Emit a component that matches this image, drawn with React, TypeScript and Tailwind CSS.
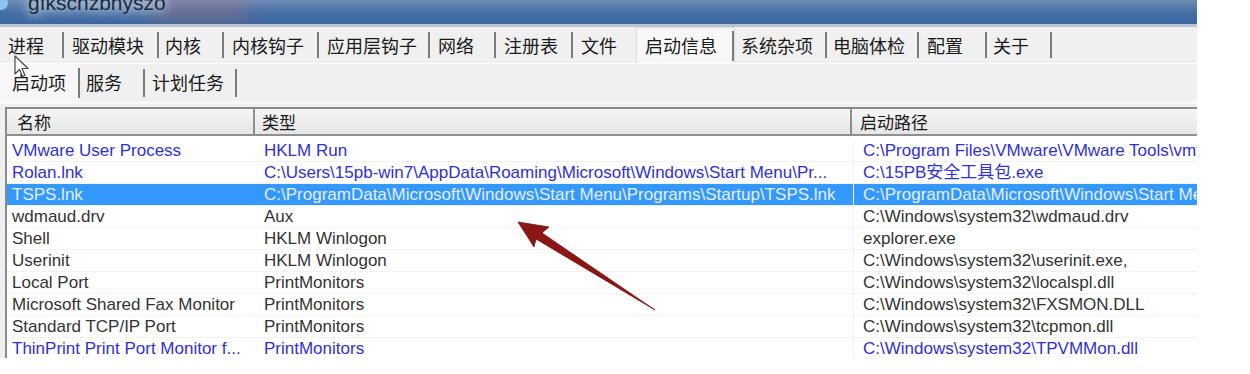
const topTabs = [
  { label: "进程", w: "w-[64px]", pl: "pl-[8px]" },
  { label: "驱动模块", w: "w-[95px]", pl: "pl-[8px]" },
  { label: "内核", w: "w-[65px]", pl: "pl-[6px]" },
  { label: "内核钩子", w: "w-[95px]", pl: "pl-[8px]" },
  { label: "应用层钩子", w: "w-[111px]", pl: "pl-[8px]" },
  { label: "网络", w: "w-[66px]", pl: "pl-[8px]" },
  { label: "注册表", w: "w-[77px]", pl: "pl-[8px]" },
];

const rightTabs = [
  { label: "系统杂项", w: "w-[92px]", pl: "pl-[6px]" },
  { label: "电脑体检", w: "w-[92px]", pl: "pl-[6px]" },
  { label: "配置", w: "w-[68px]", pl: "pl-[8px]" },
  { label: "关于", w: "w-[65px]", pl: "pl-[6px]" },
];

type Row = { name: string; type: string; path: string; tone: "blue" | "gray" | "sel" };

const rows: Row[] = [
  { name: "VMware User Process", type: "HKLM Run", path: "C:\\Program Files\\VMware\\VMware Tools\\vmtoolsd.exe", tone: "blue" },
  { name: "Rolan.lnk", type: "C:\\Users\\15pb-win7\\AppData\\Roaming\\Microsoft\\Windows\\Start Menu\\Pr...", path: "C:\\15PB安全工具包.exe", tone: "blue" },
  { name: "TSPS.lnk", type: "C:\\ProgramData\\Microsoft\\Windows\\Start Menu\\Programs\\Startup\\TSPS.lnk", path: "C:\\ProgramData\\Microsoft\\Windows\\Start Menu\\Programs", tone: "sel" },
  { name: "wdmaud.drv", type: "Aux", path: "C:\\Windows\\system32\\wdmaud.drv", tone: "gray" },
  { name: "Shell", type: "HKLM Winlogon", path: "explorer.exe", tone: "gray" },
  { name: "Userinit", type: "HKLM Winlogon", path: "C:\\Windows\\system32\\userinit.exe,", tone: "gray" },
  { name: "Local Port", type: "PrintMonitors", path: "C:\\Windows\\system32\\localspl.dll", tone: "gray" },
  { name: "Microsoft Shared Fax Monitor", type: "PrintMonitors", path: "C:\\Windows\\system32\\FXSMON.DLL", tone: "gray" },
  { name: "Standard TCP/IP Port", type: "PrintMonitors", path: "C:\\Windows\\system32\\tcpmon.dll", tone: "gray" },
  { name: "ThinPrint Print Port Monitor f...", type: "PrintMonitors", path: "C:\\Windows\\system32\\TPVMMon.dll", tone: "blue" },
];

const toneClass = {
  blue: "text-[#3030d8]",
  gray: "text-[#333333]",
  sel: "bg-[#3399ff] text-[#e6eeff]",
};

function Sep({ h }: { h: string }) {
  return <span className={`w-[2px] shrink-0 bg-[#7a7a7a] ${h}`} />;
}

export default function App() {
  return (
    <div className="relative h-[374px] w-[1250px] overflow-hidden bg-white font-['Noto_Sans_CJK_SC',sans-serif]">
      <div className="flex h-[358px] w-[1197px] flex-col overflow-hidden bg-[#f0f0f0]">
        {/* title bar */}
        <div className="relative flex h-[24px] shrink-0 items-start overflow-hidden bg-gradient-to-b from-[#6f8fb8] via-[#456fa5] to-[#3c66a0]">
          <div className="absolute -left-[6px] -top-[4px] h-[14px] w-[14px] rounded-full bg-[#8cc4ee]" />
          <div className="absolute left-[150px] -top-[6px] h-[30px] w-[100px] rounded-full bg-[#b07078] opacity-40 blur-md" />
          <span className="relative -mt-[9px] ml-[28px] font-['Liberation_Sans',sans-serif] text-[21px] leading-[24px] text-[#1e2a38] [text-shadow:0_0_8px_#d8e2ee,0_0_14px_#d8e2ee]">
            gfkscnzbnyszo
          </span>
        </div>
        <div className="h-[3px] shrink-0 bg-[#b8c4d2]" />

        {/* main tabs */}
        <div className="flex h-[36px] shrink-0 items-center text-[18px] text-[#1a1a1a]">
          {topTabs.map((t) => (
            <div key={t.label} className={`flex h-full items-center justify-between ${t.w}`}>
              <span className={t.pl}>{t.label}</span>
              <Sep h="h-[26px]" />
            </div>
          ))}
          <div className="flex h-full w-[63px] items-center pl-[8px]">文件</div>
          <div className="flex h-full w-[99px] items-center justify-between border border-b-0 border-[#dcdcdc] bg-[#f7f7f7]">
            <span className="pl-[8px]">启动信息</span>
            <Sep h="h-[30px]" />
          </div>
          {rightTabs.map((t) => (
            <div key={t.label} className={`flex h-full items-center justify-between ${t.w}`}>
              <span className={t.pl}>{t.label}</span>
              <Sep h="h-[26px]" />
            </div>
          ))}
        </div>
        <div className="h-px shrink-0 bg-white" />

        {/* sub tabs */}
        <div className="flex h-[37px] shrink-0 items-center text-[18px] text-[#1a1a1a]">
          <div className="flex h-full w-[80px] items-center justify-between bg-[#f7f7f7] pl-[12px]">
            <span>启动项</span>
            <Sep h="h-[30px]" />
          </div>
          <div className="flex h-full w-[65px] items-center justify-between pl-[6px]">
            <span>服务</span>
            <Sep h="h-[28px]" />
          </div>
          <div className="flex h-full w-[92px] items-center justify-between pl-[7px]">
            <span>计划任务</span>
            <Sep h="h-[28px]" />
          </div>
        </div>
        <div className="h-[3px] shrink-0 bg-[#f8f8f8]" />
        <div className="h-[3px] shrink-0" />

        {/* list */}
        <div className="ml-[5px] flex min-h-0 flex-1 flex-col overflow-hidden border-l-2 border-t-2 border-[#8a8a8a] bg-white">
          <div className="flex h-[27px] shrink-0 border-b-2 border-[#8f8f8f] bg-gradient-to-b from-[#f6f6f6] to-[#e6e6e6] text-[17px] leading-[25px] text-[#1a1a1a]">
            <div className="w-[248px] shrink-0 border-r-2 border-[#8f8f8f] pl-[10px]">名称</div>
            <div className="w-[597px] shrink-0 border-r-2 border-[#8f8f8f] pl-[7px]">类型</div>
            <div className="flex-1 pl-[8px]">启动路径</div>
          </div>
          <div className="h-[4px] shrink-0" />
          {rows.map((r) => (
            <div
              key={r.name}
              className={`flex h-[22px] shrink-0 border-b border-[#f2f2f2] font-['Liberation_Sans','Noto_Sans_CJK_SC',sans-serif] text-[17px] leading-[21px] ${toneClass[r.tone]}`}
            >
              <div className="w-[248px] shrink-0 overflow-hidden whitespace-nowrap pl-[5px]">{r.name}</div>
              <div className="w-[599px] shrink-0 overflow-hidden whitespace-nowrap border-r border-[#f2f2f2] pl-[9px]">{r.type}</div>
              <div className="min-w-0 flex-1 overflow-hidden whitespace-nowrap pl-[9px]">{r.path}</div>
            </div>
          ))}
        </div>
      </div>

      {/* mouse cursor */}
      <svg className="absolute left-[14px] top-[55px]" width="16" height="24" viewBox="0 0 16 24">
        <path
          d="M1 1 L1 19 L5.5 14.5 L8.5 21.5 L11 20.5 L8 13.5 L14 13.5 Z"
          fill="#ffffff"
          fillOpacity="0.6"
          stroke="#4a4a4a"
          strokeWidth="1.2"
          strokeLinejoin="round"
        />
      </svg>

      {/* annotation arrow */}
      <svg className="absolute left-0 top-0" width="1250" height="374" viewBox="0 0 1250 374">
        <polygon
          points="518,222 549,227 542,233 655,310 536,239 534,247"
          fill="#8b1616"
          stroke="#7a1010"
          strokeWidth="0.8"
          strokeLinejoin="round"
        />
      </svg>
    </div>
  );
}
